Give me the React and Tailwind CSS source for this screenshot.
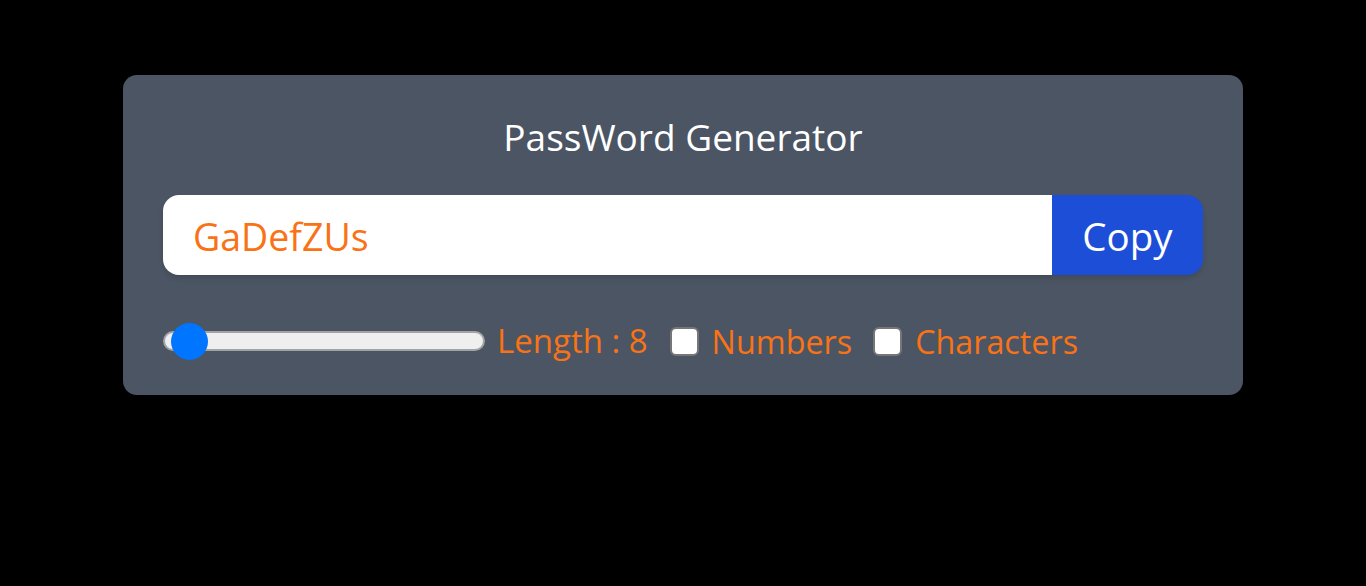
import React, { useState } from 'react';

const App = () => {
    const [length, setLength] = useState(8);
    const [numberAllowed, setNumberAllowed] = useState(false);
    const [charAllowed, setCharAllowed] = useState(false);
    const password = 'GaDefZUs';

    return (
        <div className="min-h-screen bg-black pt-[75px] font-['Open_Sans',sans-serif]">
            <div className="mx-auto w-[1120px] rounded-[14px] bg-[#4b5563] px-10 pt-[38px] pb-[34px]">
                <h1 className="text-center text-[37px] leading-[48px] text-white">PassWord Generator</h1>

                {/* Password + copy */}
                <div className="mt-[34px] flex h-[80px] overflow-hidden rounded-2xl shadow-md">
                    <input
                        type="text"
                        value={password}
                        readOnly
                        className="min-w-0 flex-1 bg-white px-[30px] pt-[4px] text-[37.5px] text-[#f97316] outline-none"
                    />
                    <button className="w-[151px] shrink-0 bg-[#1d4ed8] pt-[4px] text-[38.5px] text-white">Copy</button>
                </div>

                {/* Options */}
                <div className="mt-[46px] flex h-[40px] items-center text-[33px] text-[#f97316]">
                    <input
                        type="range"
                        min={6}
                        max={100}
                        value={length}
                        onChange={(e) => setLength(e.target.value)}
                        className="h-[20px] w-[322px] cursor-pointer appearance-none rounded-full border-2 border-[#a3a3a3] bg-[#efefef] [&::-webkit-slider-thumb]:h-[37px] [&::-webkit-slider-thumb]:w-[37px] [&::-webkit-slider-thumb]:appearance-none [&::-webkit-slider-thumb]:rounded-full [&::-webkit-slider-thumb]:bg-[#0075ff]"
                    />
                    <label className="ml-[12px]">Length : {length}</label>

                    <input
                        type="checkbox"
                        checked={numberAllowed}
                        onChange={() => setNumberAllowed((p) => !p)}
                        className="ml-[22px] h-[29px] w-[29px] appearance-none rounded-[6px] border-2 border-[#767676] bg-white"
                    />
                    <label className="ml-[13px] text-[32.3px]">Numbers</label>

                    <input
                        type="checkbox"
                        checked={charAllowed}
                        onChange={() => setCharAllowed((p) => !p)}
                        className="ml-[21px] h-[29px] w-[29px] appearance-none rounded-[6px] border-2 border-[#767676] bg-white"
                    />
                    <label className="ml-[13px] text-[32.3px]">Characters</label>
                </div>
            </div>
        </div>
    );
};

export default App;
